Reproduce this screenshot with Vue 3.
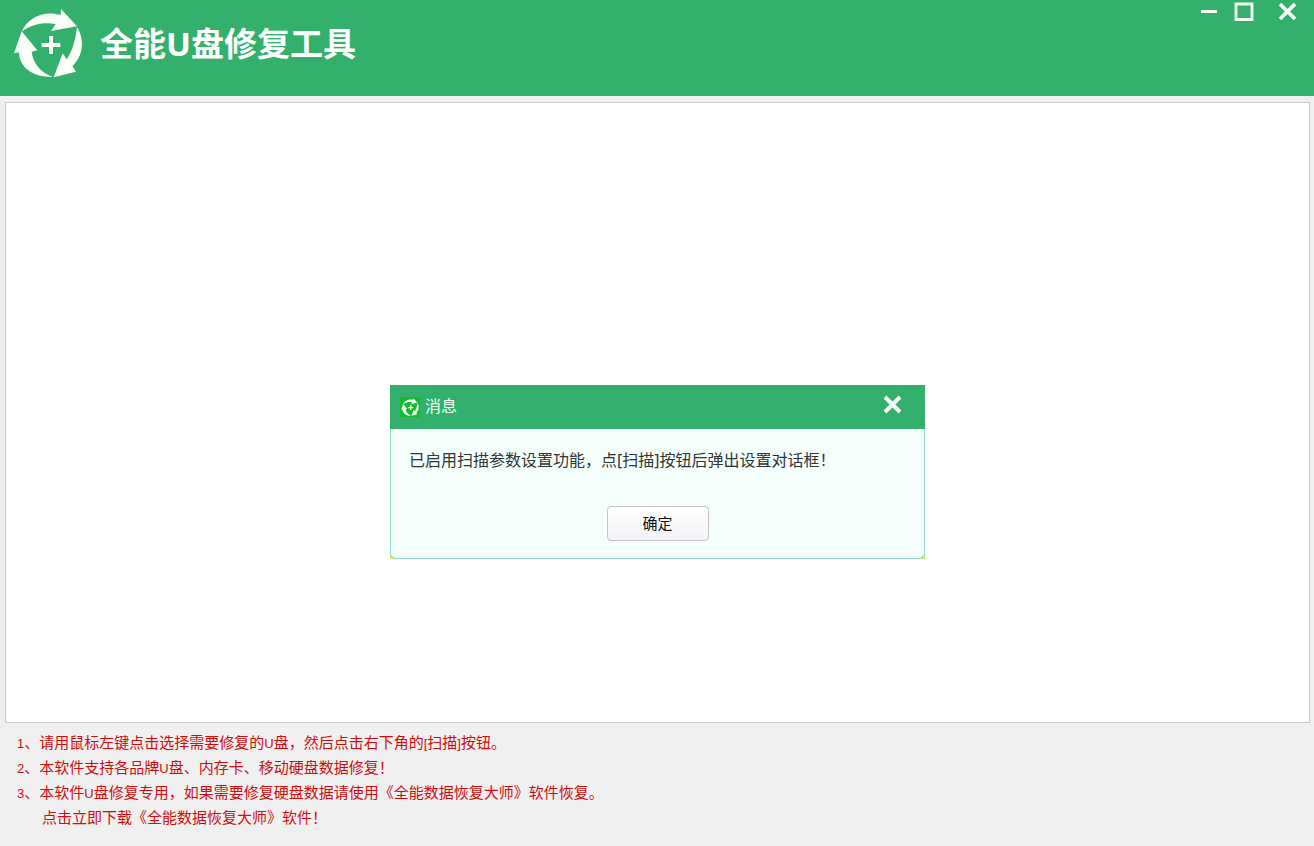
<script setup>
import { ref } from 'vue'

const dialogOpen = ref(true)
const logoArrows = [
  'M64 93C82 50 132 28 181 43L182 25L230 77L152 91L166 70C134 64 98 68 64 93Z',
  'M230 79C253 115 250 166 216 196L227 213L160 230L187 158L199 176C217 150 225 118 230 79Z',
  'M157 229C98 230 56 200 56 155L41 158L64 92L111 149L94 153C98 188 120 214 157 229Z',
]
</script>

<template>
  <div class="app">
    <header class="titlebar">
      <svg class="logo" viewBox="38 22 210 210" aria-hidden="true">
        <path v-for="d in logoArrows" :key="d" :d="d" />
        <path d="M146 106h12v21h22v12h-22v21h-12v-21h-22v-12h22z" />
      </svg>
      <h1>全能U盘修复工具</h1>
      <div class="window-buttons">
        <button type="button" aria-label="最小化">
          <svg viewBox="0 0 20 20"><path d="M2 10.500H18" stroke-width="3" /></svg>
        </button>
        <button type="button" aria-label="最大化">
          <svg viewBox="0 0 20 20"><path d="M2 3H18V18.500H2Z" stroke-width="2.800" /></svg>
        </button>
        <button type="button" class="close" aria-label="关闭">
          <svg viewBox="0 0 20 20"><path d="M2 3L17 18M17 3L2 18" stroke-width="3.800" /></svg>
        </button>
      </div>
    </header>

    <main class="panel">
      <section v-if="dialogOpen" class="dialog" role="dialog" aria-labelledby="dialog-title">
        <div class="dialog-head">
          <span class="mini">
            <svg viewBox="38 22 210 210" aria-hidden="true">
              <path v-for="d in logoArrows" :key="d" :d="d" />
              <path d="M144 104h15v22h22v15h-22v21h-15v-21h-22v-15h22z" />
            </svg>
          </span>
          <h2 id="dialog-title">消息</h2>
          <button type="button" aria-label="关闭" @click="dialogOpen = false">
            <svg viewBox="0 0 20 20"><path d="M2 2L17 17M17 2L2 17" stroke-width="4" /></svg>
          </button>
        </div>
        <div class="dialog-body">
          <p>已启用扫描参数设置功能，点[扫描]按钮后弹出设置对话框！</p>
          <button type="button" class="ok" @click="dialogOpen = false">确定</button>
        </div>
      </section>
    </main>

    <footer class="tips">
      <p><span>1</span>、请用鼠标左键点击选择需要修复的<span>U</span>盘，然后点击右下角的<span>[</span>扫描<span>]</span>按钮。</p>
      <p><span>2</span>、本软件支持各品牌<span>U</span>盘、内存卡、移动硬盘数据修复！</p>
      <p><span>3</span>、本软件<span>U</span>盘修复专用，如果需要修复硬盘数据请使用《全能数据恢复大师》软件恢复。</p>
      <p class="download"><a href="#download">点击立即下载《全能数据恢复大师》软件！</a></p>
    </footer>
  </div>
</template>

<style>
body {
  margin: 0;
}
</style>

<style scoped>
* {
  box-sizing: border-box;
}

.app {
  display: flex;
  flex-direction: column;
  min-height: 100vh;
  background: #f0f0f0;
  font-family: "Liberation Sans", "Noto Sans CJK SC", sans-serif;
}

h1,
h2,
p {
  margin: 0;
}

button {
  padding: 0;
  border: 0;
  background: none;
  font-family: inherit;
}

svg {
  display: block;
}

.titlebar {
  display: flex;
  align-items: flex-start;
  height: 96px;
  padding: 0 16px 0 13px;
  background: #33b16c;
  color: #fff;
}

.logo {
  width: 70px;
  height: 70px;
  margin-top: 8px;
  fill: #fafffa;
}

h1 {
  margin: 20px 0 0 17px;
  font-family: "Noto Sans", "Noto Sans CJK SC", sans-serif;
  font-size: 33px;
  line-height: 48px;
  font-weight: 700;
}

.window-buttons {
  display: flex;
  gap: 15px;
  margin-left: auto;
  padding-top: 1px;
}

.window-buttons svg,
.dialog-head button svg {
  width: 20px;
  height: 20px;
  fill: none;
  stroke: #f4fff8;
}

.window-buttons .close {
  margin-left: 9px;
}

.panel {
  position: relative;
  flex: 1;
  margin: 6px 4px 0 5px;
  border: 1px solid #c8caca;
  background: #fff;
}

.dialog {
  position: absolute;
  top: 282px;
  left: 0;
  right: 0;
  width: 535px;
  margin: 0 auto;
  background: linear-gradient(#c8f26a, #c8f26a) bottom / 100% 8px no-repeat;
}

.dialog-head {
  display: flex;
  align-items: center;
  height: 44px;
  padding: 0 22px 0 10px;
  background: #33b16c;
}

.mini {
  padding: 1px;
  background: #16b832;
}

.mini svg {
  width: 18px;
  height: 18px;
  fill: #f2fff0;
}

h2 {
  margin-left: 5px;
  color: #f2fff6;
  font-size: 16px;
  line-height: 24px;
  font-weight: 400;
}

.dialog-head button {
  margin: 0 0 5px auto;
}

.dialog-body {
  display: flex;
  flex-direction: column;
  align-items: center;
  padding: 18px 18px 17px;
  border: 1px solid #8fdccb;
  border-top: 0;
  border-radius: 0 0 6px 6px;
  background: #f4fefb;
}

.dialog-body p {
  align-self: stretch;
  color: #333;
  font-family: "Noto Sans", "Noto Sans CJK SC", sans-serif;
  font-size: 16px;
  line-height: 26px;
}

.ok {
  width: 102px;
  height: 35px;
  margin-top: 33px;
  padding-bottom: 3px;
  border: 1px solid #c2c2c8;
  border-radius: 4px;
  background: linear-gradient(#fff, #f3f3f8);
  color: #111;
  font-size: 15px;
}

.tips {
  padding: 7px 17px 16px;
  color: #d00c0c;
  font-size: 15px;
  line-height: 25px;
}

.tips span {
  font-size: 13px;
  line-height: 1;
}

.tips a {
  color: inherit;
  text-decoration: none;
}

.download {
  padding-left: 25px;
}
</style>
